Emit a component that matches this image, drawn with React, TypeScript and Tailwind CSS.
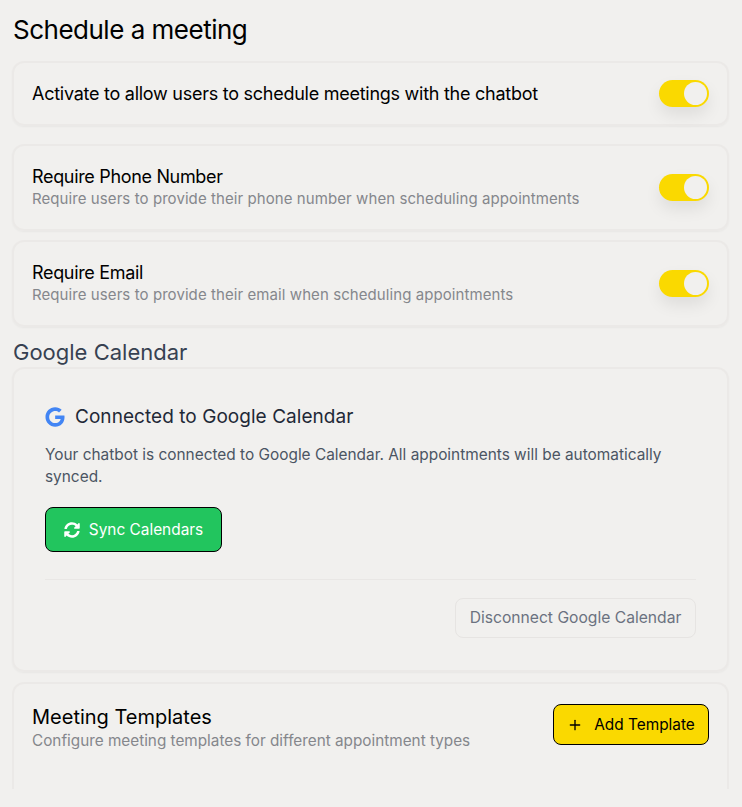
import { Plus } from "lucide-react";
import { FaGoogle, FaSyncAlt } from "react-icons/fa";

function Toggle() {
  return (
    <div className="w-[50px] h-[27px] rounded-full bg-[#fad900] flex items-center justify-end pr-[2px] shadow-[0_8px_16px_rgba(0,0,0,0.08)] shrink-0">
      <div className="w-[23px] h-[23px] rounded-full bg-[#f1f0ee]" />
    </div>
  );
}

function Card({ title, desc }: { title: string; desc: string }) {
  return (
    <div className="rounded-xl border-2 border-[#ebe9e7] flex items-center justify-between pl-[18px] pr-[18px] shadow-[0_1px_2px_rgba(0,0,0,0.04)] h-[87px]">
      <div className="-mt-[2px]">
        <div className="text-[18px] tracking-[-0.33px] leading-[24px] text-black">{title}</div>
        <div className="text-[15px] tracking-[0.08px] leading-[20px] text-[#85878c]">{desc}</div>
      </div>
      <Toggle />
    </div>
  );
}

export default function App() {
  return (
    <div className="w-[742px] h-[807px] overflow-hidden bg-[#f1f0ee] pl-3 pr-[13px] font-['Inter',sans-serif]">
      <h1 className="pt-[13px] pl-px h-[61px] text-[26px] tracking-[-0.5px] leading-[34px] text-black">Schedule a meeting</h1>
      <div className="h-[65px] rounded-xl border-2 border-[#ebe9e7] flex items-center justify-between pl-[18px] pr-[18px] shadow-[0_1px_2px_rgba(0,0,0,0.04)]">
        <div className="text-[18px] tracking-[-0.26px] text-black">Activate to allow users to schedule meetings with the chatbot</div>
        <Toggle />
      </div>
      <div className="mt-[18px] flex flex-col gap-[9px]">
        <Card title="Require Phone Number" desc="Require users to provide their phone number when scheduling appointments" />
        <Card title="Require Email" desc="Require users to provide their email when scheduling appointments" />
      </div>
      <h2 className="h-[40px] pt-[11px] pl-px text-[22px] leading-[28px] text-[#374151]">Google Calendar</h2>
      <div className="h-[305px] rounded-xl border-2 border-[#ebe9e7] px-[31px] pt-[34px] shadow-[0_1px_2px_rgba(0,0,0,0.04)]">
        <div className="flex items-center gap-[10px] h-[28px]">
          <FaGoogle size={20} color="#4285f4" />
          <div className="text-[19px] text-[#1f2937] tracking-[0.05px]">Connected to Google Calendar</div>
        </div>
        <p className="mt-[13px] text-[15.4px] leading-[22px] text-[#4b5563]">
          Your chatbot is connected to Google Calendar. All appointments will be automatically synced.
        </p>
        <button className="mt-[19px] w-[177px] h-[45px] rounded-lg bg-[#22c55e] border border-black text-white text-[15.4px] flex items-center justify-center gap-[9px]">
          <FaSyncAlt size={16} />
          Sync Calendars
        </button>
        <div className="mt-[27px] border-t border-[#e9e7e5]" />
        <div className="mt-[18px] flex justify-end">
          <button className="w-[241px] h-[40px] rounded-lg border border-[#e6e4e2] text-[15.65px] text-[#6b7280]">
            Disconnect Google Calendar
          </button>
        </div>
      </div>
      <div className="mt-[10px] h-[107px] rounded-t-xl border-2 border-b-0 border-[#ebe9e7] pl-[18px] pr-[18px] pt-[20px] flex justify-between">
        <div>
          <div className="text-[20px] leading-[26px] text-black">Meeting Templates</div>
          <div className="text-[15.3px] leading-[22px] text-[#85878c]">Configure meeting templates for different appointment types</div>
        </div>
        <button className="w-[156px] h-[41px] rounded-lg bg-[#fad900] border border-black text-black text-[15.4px] flex items-center justify-center gap-[11px]">
          <Plus size={16} />
          Add Template
        </button>
      </div>
    </div>
  );
}
